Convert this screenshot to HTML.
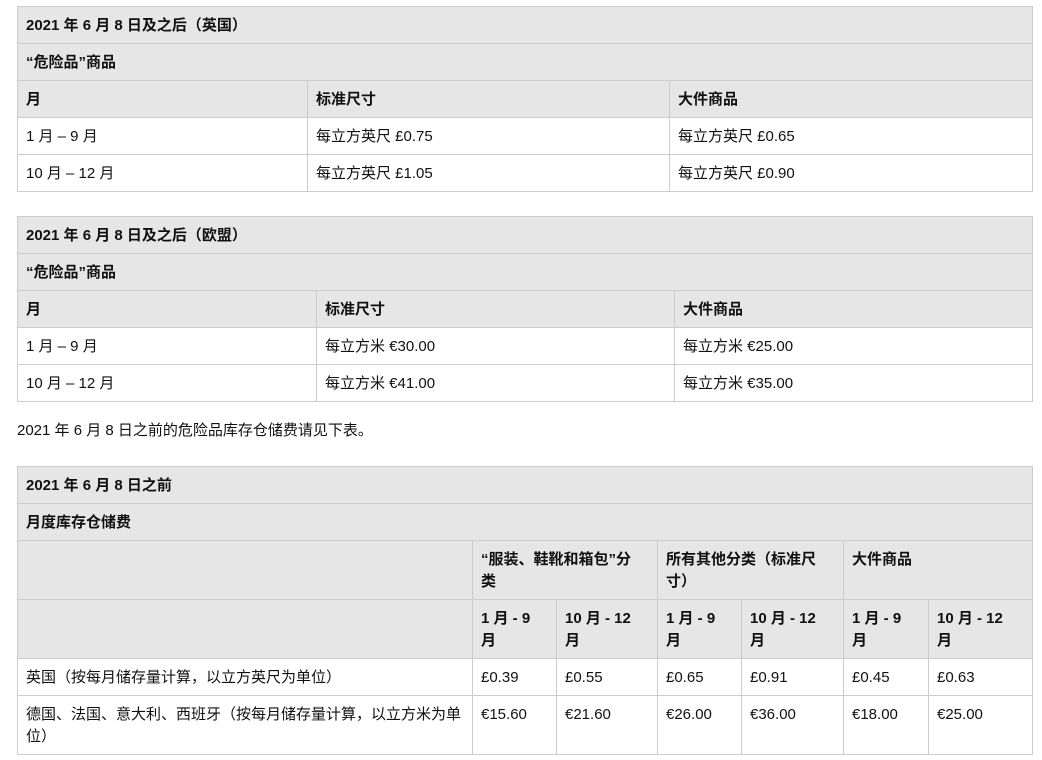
<!DOCTYPE html>
<html><head><meta charset="utf-8"><style>
body{margin:0;background:#fff;font-family:"Liberation Sans","Noto Sans CJK SC",sans-serif;font-size:15px;color:#111;}
table{position:absolute;left:17px;border-collapse:collapse;table-layout:fixed;}
td{border:1px solid #ccc;padding:8px 8px 0 8px;vertical-align:top;line-height:22px;box-sizing:border-box;white-space:nowrap;}
.h td,td.h{background:#e6e6e6;font-weight:bold;}
tr{height:37px;}
p{position:absolute;left:17px;top:420px;margin:0;line-height:22px;}
</style></head><body>
<table style="top:6px;width:1015px">
<colgroup><col style="width:290px"><col style="width:362px"><col style="width:363px"></colgroup>
<tr class="h"><td colspan="3">2021 年 6 月 8 日及之后（英国）</td></tr>
<tr class="h"><td colspan="3">“危险品”商品</td></tr>
<tr class="h"><td>月</td><td>标准尺寸</td><td>大件商品</td></tr>
<tr><td>1 月 – 9 月</td><td>每立方英尺 £0.75</td><td>每立方英尺 £0.65</td></tr>
<tr><td>10 月 – 12 月</td><td>每立方英尺 £1.05</td><td>每立方英尺 £0.90</td></tr>
</table>
<table style="top:216px;width:1015px">
<colgroup><col style="width:299px"><col style="width:358px"><col style="width:358px"></colgroup>
<tr class="h"><td colspan="3">2021 年 6 月 8 日及之后（欧盟）</td></tr>
<tr class="h"><td colspan="3">“危险品”商品</td></tr>
<tr class="h"><td>月</td><td>标准尺寸</td><td>大件商品</td></tr>
<tr><td>1 月 – 9 月</td><td>每立方米 €30.00</td><td>每立方米 €25.00</td></tr>
<tr><td>10 月 – 12 月</td><td>每立方米 €41.00</td><td>每立方米 €35.00</td></tr>
</table>
<p>2021 年 6 月 8 日之前的危险品库存仓储费请见下表。</p>
<table style="top:466px;width:1015px">
<colgroup><col style="width:455px"><col style="width:84px"><col style="width:101px"><col style="width:84px"><col style="width:102px"><col style="width:85px"><col style="width:104px"></colgroup>
<tr class="h"><td colspan="7">2021 年 6 月 8 日之前</td></tr>
<tr class="h"><td colspan="7">月度库存仓储费</td></tr>
<tr class="h" style="height:59px"><td></td><td colspan="2">“服装、鞋靴和箱包”分<br>类</td><td colspan="2">所有其他分类（标准尺<br>寸）</td><td colspan="2">大件商品</td></tr>
<tr class="h" style="height:59px"><td></td><td>1 月 - 9<br>月</td><td>10 月 - 12<br>月</td><td>1 月 - 9<br>月</td><td>10 月 - 12<br>月</td><td>1 月 - 9<br>月</td><td>10 月 - 12<br>月</td></tr>
<tr><td>英国（按每月储存量计算，以立方英尺为单位）</td><td>£0.39</td><td>£0.55</td><td>£0.65</td><td>£0.91</td><td>£0.45</td><td>£0.63</td></tr>
<tr style="height:59px"><td>德国、法国、意大利、西班牙（按每月储存量计算，以立方米为单<br>位）</td><td>€15.60</td><td>€21.60</td><td>€26.00</td><td>€36.00</td><td>€18.00</td><td>€25.00</td></tr>
</table>
</body></html>
